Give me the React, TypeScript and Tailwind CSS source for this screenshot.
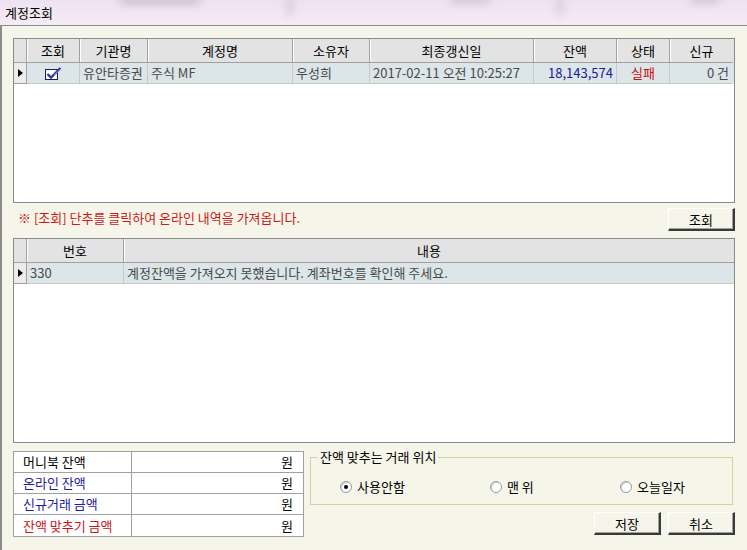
import React from 'react';

type Col = { label: string; w: number };

const topCols: Col[] = [
  { label: '조회', w: 53 },
  { label: '기관명', w: 68 },
  { label: '계정명', w: 145 },
  { label: '소유자', w: 77 },
  { label: '최종갱신일', w: 164 },
  { label: '잔액', w: 83 },
  { label: '상태', w: 53 },
  { label: '신규', w: 63 },
];

const CheckIcon = () => (
  <svg width="18" height="14" viewBox="0 0 18 14">
    <rect x="1.5" y="3.5" width="12" height="10" fill="#fff" stroke="#1c1c5c" />
    <path d="M3.5 8 L7 11.5 L16.5 2" fill="none" stroke="#3434a8" strokeWidth="2.4" />
    <path d="M10 9 L17 3" fill="none" stroke="#9a9ad8" strokeWidth="1" />
  </svg>
);

const RowArrow = () => (
  <span className="w-0 h-0 border-y-[4px] border-y-transparent border-l-[5px] border-l-black" />
);

const Radio = ({ checked, label }: { checked?: boolean; label: string }) => (
  <label className="flex items-center gap-[5px]">
    <span className="w-[12px] h-[12px] rounded-full bg-white border border-[#9a9a9a] flex items-center justify-center shadow-[inset_1px_1px_0_#d0d0d0]">
      {checked && <span className="w-[4px] h-[4px] rounded-full bg-black" />}
    </span>
    <span>{label}</span>
  </label>
);

const WinButton = ({ label }: { label: string }) => (
  <button className="w-[67px] h-[23px] bg-[#f5f6e9] border-t border-l border-t-white border-l-white border-r-2 border-b-2 border-r-[#3a3a3a] border-b-[#3a3a3a] shadow-[inset_-1px_-1px_0_#a0a0a0] text-[13px] pt-[1px]">
    {label}
  </button>
);

export default function App() {
  return (
    <div className="w-[747px] h-[550px] overflow-hidden flex flex-col bg-[#f5f6e9] text-[13px] text-black font-['Noto_Sans_CJK_KR','Liberation_Sans',sans-serif]">
      {/* title bar */}
      <div className="h-[25px] relative overflow-hidden bg-gradient-to-b from-[#eee2f0] to-[#f5ecf6] flex items-center pl-[5px] shrink-0">
        <span className="absolute left-[120px] top-[-5px] w-[80px] h-[10px] bg-[#a9a0b0] blur-[4px] opacity-50" />
        <span className="absolute left-[287px] top-[-4px] w-[6px] h-[20px] bg-[#b8b0c0] blur-[4px] opacity-50" />
        <span className="absolute left-[450px] top-[-5px] w-[40px] h-[9px] bg-[#a9a0b0] blur-[4px] opacity-40" />
        <span className="absolute left-[557px] top-[-4px] w-[6px] h-[20px] bg-[#b8b0c0] blur-[4px] opacity-50" />
        <span className="absolute left-[690px] top-[-5px] w-[30px] h-[9px] bg-[#a9a0b0] blur-[4px] opacity-40" />
        <span className="relative">계정조회</span>
      </div>

      <div className="flex-1 border-t border-l-2 border-[#8c8c8c] pl-[11px] pr-[12px] pt-[12px] flex flex-col">
        {/* grid 1 */}
        <div className="h-[165px] bg-white border border-[#8a8a8a] flex flex-col">
          <div className="flex h-[24px] bg-[#e3e3e3]">
            <div className="w-[13px] border-r border-b border-[#a0a0a0]" />
            {topCols.map((c) => (
              <div
                key={c.label}
                style={{ width: c.w }}
                className="border-r border-b border-[#a0a0a0] flex items-center justify-center shadow-[inset_1px_0_0_#fff] last:border-r-0"
              >
                {c.label}
              </div>
            ))}
          </div>
          <div className="flex h-[21px] bg-[#dce5e8] text-[#4a4a4a]">
            <div className="w-[13px] bg-[#ececec] border-r border-b border-[#a0a0a0] flex items-center justify-center">
              <RowArrow />
            </div>
            <div className="w-[53px] border-r border-b border-[#c8c8c8] flex items-center justify-center">
              <CheckIcon />
            </div>
            <div className="w-[68px] border-r border-b border-[#c8c8c8] flex items-center px-[3px] whitespace-nowrap overflow-hidden">유안타증권</div>
            <div className="w-[145px] border-r border-b border-[#c8c8c8] flex items-center px-[3px]">주식 MF</div>
            <div className="w-[77px] border-r border-b border-[#c8c8c8] flex items-center px-[3px]">우성희</div>
            <div className="w-[164px] border-r border-b border-[#c8c8c8] flex items-center px-[3px] whitespace-nowrap">2017-02-11 오전 10:25:27</div>
            <div className="w-[83px] border-r border-b border-[#c8c8c8] flex items-center justify-end px-[3px] text-[#1a1a9a]">18,143,574</div>
            <div className="w-[53px] border-r border-b border-[#c8c8c8] flex items-center justify-center text-[#d01010]">실패</div>
            <div className="w-[62px] border-b border-[#c8c8c8] flex items-center justify-end px-[3px]">0 건</div>
          </div>
        </div>

        {/* message + button */}
        <div className="h-[35px] flex items-start">
          <span className="mt-[5px] ml-[5px] text-[#cc1a1a]">※ [조회] 단추를 클릭하여 온라인 내역을 가져옵니다.</span>
          <div className="ml-auto mt-[5px]">
            <WinButton label="조회" />
          </div>
        </div>

        {/* grid 2 */}
        <div className="h-[205px] bg-white border border-[#8a8a8a] flex flex-col">
          <div className="flex h-[24px] bg-[#e3e3e3]">
            <div className="w-[13px] border-r border-b border-[#a0a0a0]" />
            <div className="w-[97px] border-r border-b border-[#a0a0a0] flex items-center justify-center shadow-[inset_1px_0_0_#fff]">번호</div>
            <div className="flex-1 border-b border-[#a0a0a0] flex items-center justify-center shadow-[inset_1px_0_0_#fff]">내용</div>
          </div>
          <div className="flex h-[21px] bg-[#dce5e8] text-[#4a4a4a]">
            <div className="w-[13px] bg-[#ececec] border-r border-b border-[#a0a0a0] flex items-center justify-center">
              <RowArrow />
            </div>
            <div className="w-[97px] border-r border-b border-[#c8c8c8] flex items-center px-[3px]">330</div>
            <div className="flex-1 border-b border-[#c8c8c8] flex items-center px-[3px]">계정잔액을 가져오지 못했습니다. 계좌번호를 확인해 주세요.</div>
          </div>
        </div>

        {/* bottom area */}
        <div className="flex mt-[8px]">
          <div className="w-[291px] bg-white border border-[#a0a0a0] flex flex-col">
            {[
              { t: '머니북 잔액', c: 'text-black' },
              { t: '온라인 잔액', c: 'text-[#1c1c9c]' },
              { t: '신규거래 금액', c: 'text-[#1c1c9c]' },
              { t: '잔액 맞추기 금액', c: 'text-[#c81414]' },
            ].map((r, i) => (
              <div key={r.t} className={`flex h-[21px] ${i < 3 ? 'border-b border-[#a0a0a0]' : ''}`}>
                <div className={`w-[118px] border-r border-[#a0a0a0] flex items-center pl-[9px] ${r.c}`}>{r.t}</div>
                <div className="flex-1 flex items-center justify-end pr-[10px]">원</div>
              </div>
            ))}
          </div>

          <div className="flex-1 ml-[6px] flex flex-col">
            <fieldset className="border border-[#d0d59a] mr-[2px]">
              <legend className="ml-[7px] px-[2px] leading-[12px]">잔액 맞추는 거래 위치</legend>
              <div className="h-[41px] flex items-center pt-[7px] pl-[29px]">
                <div className="w-[150px]">
                  <Radio checked label="사용안함" />
                </div>
                <div className="w-[130px]">
                  <Radio label="맨 위" />
                </div>
                <Radio label="오늘일자" />
              </div>
            </fieldset>
            <div className="flex justify-end gap-[7px] mt-[7px]">
              <WinButton label="저장" />
              <WinButton label="취소" />
            </div>
          </div>
        </div>
      </div>
    </div>
  );
}
